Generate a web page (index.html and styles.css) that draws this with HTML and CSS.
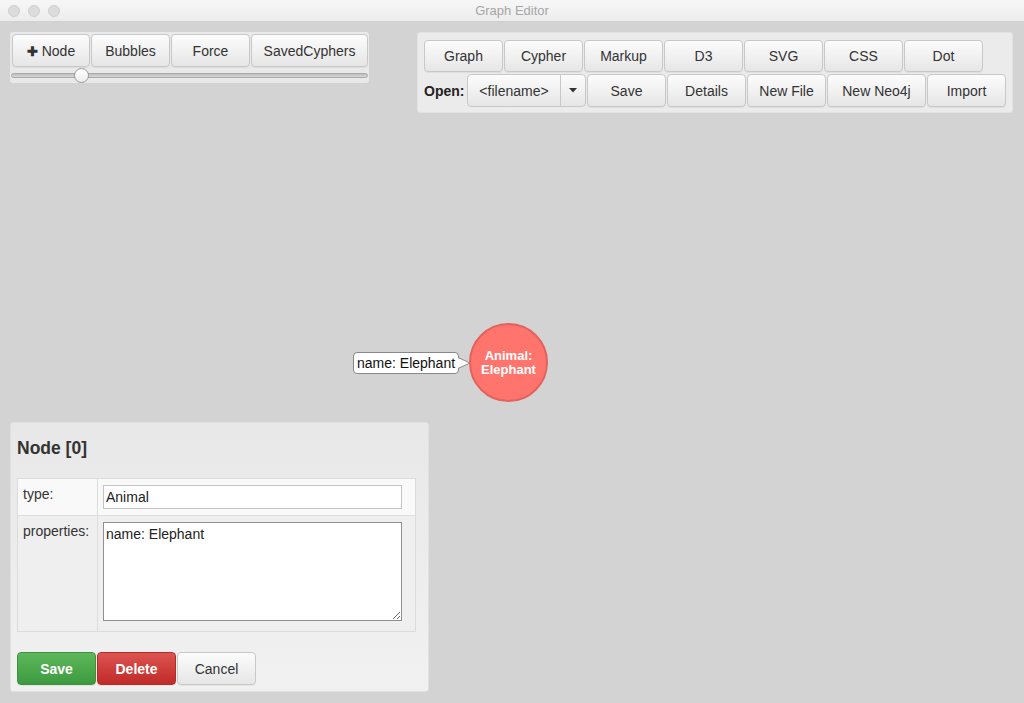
FILE: index.html
```html
<!DOCTYPE html>
<html>
<head>
<meta charset="utf-8">
<title>Graph Editor</title>
<link rel="stylesheet" href="styles.css">
</head>
<body>
<div class="window">
  <header class="titlebar">
    <div class="lights"><span></span><span></span><span></span></div>
    <div class="title">Graph Editor</div>
  </header>
  <main class="stage">
    <div class="canvas">
      <div class="bubble">name: Elephant</div>
      <div class="graph-node"><span>Animal:<br>Elephant</span></div>
    </div>
    <div class="top">
      <div class="toolbar-left">
        <div class="btn-row">
          <button class="btn w78"><b class="plus">✚</b> Node</button>
          <button class="btn w79">Bubbles</button>
          <button class="btn w79">Force</button>
          <button class="btn w117">SavedCyphers</button>
        </div>
        <div class="slider"><div class="track"></div><div class="thumb"></div></div>
      </div>
      <div class="toolbar-right">
        <div class="row row1">
          <button class="btn w79">Graph</button>
          <button class="btn w79">Cypher</button>
          <button class="btn w79">Markup</button>
          <button class="btn w79">D3</button>
          <button class="btn w79">SVG</button>
          <button class="btn w79">CSS</button>
          <button class="btn w79">Dot</button>
        </div>
        <div class="row row2">
          <label class="open">Open:</label>
          <div class="combo">
            <span class="combo-text">&lt;filename&gt;</span>
            <span class="combo-arrow"><svg width="8" height="5" viewBox="0 0 8 5"><path d="M0 0 L8 0 L4 4.5 Z" fill="#333"/></svg></span>
          </div>
          <button class="btn w79">Save</button>
          <button class="btn w79">Details</button>
          <button class="btn w79">New File</button>
          <button class="btn w99">New Neo4j</button>
          <button class="btn w79">Import</button>
        </div>
      </div>
    </div>
    <section class="node-panel">
      <h2 class="panel-title">Node [0]</h2>
      <table class="props">
        <tr class="r1">
          <td class="lbl">type:</td>
          <td class="val"><input class="field" type="text" value="Animal"></td>
        </tr>
        <tr class="r2">
          <td class="lbl">properties:</td>
          <td class="val"><textarea class="area">name: Elephant</textarea></td>
        </tr>
      </table>
      <div class="actions">
        <button class="btn w79 green">Save</button>
        <button class="btn w79 red">Delete</button>
        <button class="btn w79">Cancel</button>
      </div>
    </section>
  </main>
</div>
</body>
</html>
```

FILE: styles.css
```css
* { box-sizing: border-box; }
html, body { margin: 0; padding: 0; }
body {
  font-family: "Liberation Sans", Arial, sans-serif;
  color: #333;
  width: 1024px;
  height: 703px;
  overflow: hidden;
  background: #d3d3d3;
}
.window { width: 1024px; height: 703px; display: flex; flex-direction: column; }

.titlebar {
  height: 22px;
  background: linear-gradient(#f7f7f7, #ececec);
  border-bottom: 1px solid #d0d0d0;
  display: flex;
  align-items: center;
  position: relative;
}
.lights { display: flex; gap: 8px; padding-left: 8px; }
.lights span {
  width: 12px; height: 12px; border-radius: 50%;
  background: #dcdcdc; border: 1px solid #d0d0d0;
}
.title {
  position: absolute; left: 0; right: 0; top: 0;
  text-align: center; font-size: 13px; line-height: 22px; color: #a6a6a6;
  font-family: "Liberation Sans", Arial, sans-serif;
}

.stage {
  position: relative;
  height: 681px;
  background: #d3d3d3;
  display: flex;
  flex-direction: column;
  padding: 10px 11px 10px 10px;
}

.canvas { position: absolute; left: 0; top: 0; right: 0; bottom: 0; }
.bubble {
  position: absolute;
  left: 353px; top: 330px;
  height: 22px; width: 106px;
  background: #fff;
  border: 1px solid #888;
  border-radius: 4px;
  font-size: 14px; line-height: 20px;
  padding-left: 3px;
  color: #111;
}
.bubble::after {
  content: "";
  position: absolute; right: -11px; top: 5px;
  width: 0; height: 0;
  border-top: 5px solid transparent;
  border-bottom: 5px solid transparent;
  border-left: 11px solid #fff;
}
.bubble::before {
  content: "";
  position: absolute; right: -13px; top: 4px;
  width: 0; height: 0;
  border-top: 6px solid transparent;
  border-bottom: 6px solid transparent;
  border-left: 13px solid #888;
}
.graph-node {
  position: absolute;
  left: 469px; top: 301px;
  width: 79px; height: 79px;
  border-radius: 50%;
  background: #ff756e;
  border: 2px solid #e3625b;
  display: flex; align-items: center; justify-content: center;
  text-align: center;
  color: #fff;
  font-weight: bold;
  font-size: 13px;
  line-height: 14px;
}

.top {
  position: relative;
  display: flex;
  justify-content: space-between;
  align-items: flex-start;
}

.btn {
  font-family: "Liberation Sans", Arial, sans-serif;
  font-size: 14px;
  color: #333;
  height: 33px;
  background: linear-gradient(#fcfcfc, #e6e6e6);
  border: 1px solid #c8c8c8;
  border-radius: 4px;
  padding: 0;
  margin: 0;
  box-shadow: 0 1px 0 rgba(0,0,0,0.05);
  flex: none;
}
.w78 { width: 78px; }
.w79 { width: 79px; }
.w99 { width: 99px; }
.w117 { width: 117px; }
.plus { font-size: 13px; }

.toolbar-left {
  width: 359px;
  height: 51px;
  background: #e9e9e9;
  border-radius: 3px;
  padding: 2px 1px 0 2px;
}
.btn-row { display: flex; gap: 1px; }
.slider { position: relative; height: 16px; }
.track {
  position: absolute; left: -1px; right: 0; top: 6px;
  height: 5px; border-radius: 3px;
  background: linear-gradient(#bdbdbd, #d8d8d8);
  border: 1px solid #a9a9a9;
}
.thumb {
  position: absolute; left: 62px; top: 1px;
  width: 15px; height: 15px; border-radius: 50%;
  background: linear-gradient(#fff, #ececec);
  border: 1px solid #999;
}

.toolbar-right {
  width: 596px;
  height: 81px;
  background: #ebebeb;
  border-radius: 3px;
  border: 1px solid #e2e2e2;
  padding: 7px 0 0 6px;
}
.row { display: flex; gap: 1px; }
.row1 .btn { height: 32px; }
.row2 { margin-top: 2px; align-items: center; }
.open {
  width: 42px;
  font-weight: bold;
  font-size: 14px;
  color: #222;
}
.combo {
  width: 119px; height: 33px;
  display: flex;
  background: linear-gradient(#fcfcfc, #e6e6e6);
  border: 1px solid #c8c8c8;
  border-radius: 4px;
  font-size: 14px;
}
.combo-text {
  width: 93px; display: flex; align-items: center; justify-content: center;
  border-right: 1px solid #c8c8c8;
}
.combo-arrow { flex: 1; display: flex; align-items: center; justify-content: center; }

.node-panel {
  position: relative;
  margin-top: auto;
  width: 419px;
  height: 270px;
  background: linear-gradient(#e8e8e8, #f1f1f1);
  border-radius: 3px;
  border: 1px solid #e0e0e0;
  padding: 0 6px 6px 6px;
  margin-bottom: 1px;
}
.panel-title {
  margin: 0;
  padding-top: 14px;
  height: 55px;
  font-size: 17.5px;
  line-height: 22px;
  font-weight: bold;
  color: #333;
}
.props {
  width: 399px;
  border-collapse: collapse;
  border: 1px solid #dcdcdc;
}
.props td { border: 1px solid #dcdcdc; vertical-align: top; padding: 0; }
.r1 td { background: #f9f9f9; height: 37px; }
.r2 td { background: #efefef; height: 116px; }
.lbl { width: 80px; font-size: 14px; padding: 7px 0 0 5px !important; }
.val { padding: 6px 0 0 5px !important; }
.field {
  display: block;
  width: 299px; height: 24px;
  border: 1px solid #c4c4c4;
  background: #fff;
  font-family: "Liberation Sans", Arial, sans-serif;
  font-size: 14px;
  padding: 2px 2px;
  color: #222;
  margin: 0;
}
.area {
  display: block;
  width: 299px; height: 99px;
  border: 1px solid #8f8f8f;
  background: #fff;
  font-family: "Liberation Sans", Arial, sans-serif;
  font-size: 14px;
  padding: 3px 2px;
  color: #222;
  margin: 0;
  resize: both;
}
.actions { display: flex; gap: 1px; margin-top: 20px; }
.green {
  background: linear-gradient(#5db85c, #3e9a3e);
  border-color: #3f8f3f;
  color: #fff; font-weight: bold;
}
.red {
  background: linear-gradient(#dc5450, #c02b28);
  border-color: #b52b27;
  color: #fff; font-weight: bold;
}
```
